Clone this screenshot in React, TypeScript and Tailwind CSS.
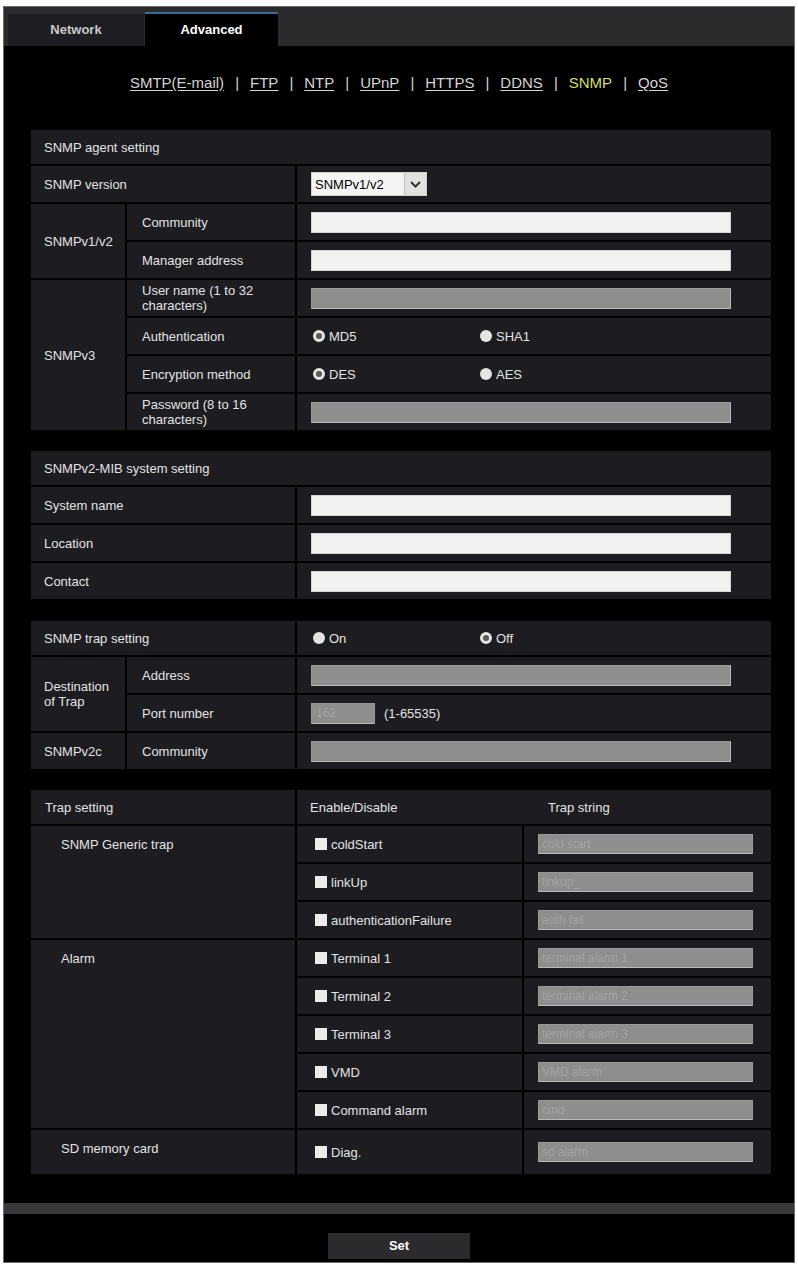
import React from "react";

const CELL = "bg-[#1d1d21] flex items-center text-[13px] leading-[15px] text-[#e2e2e2]";

const NAV = ["SMTP(E-mail)", "FTP", "NTP", "UPnP", "HTTPS", "DDNS", "SNMP", "QoS"];

const TRAPS = [
  { label: "coldStart", value: "cold start" },
  { label: "linkUp", value: "linkup_" },
  { label: "authenticationFailure", value: "auth fail" },
  { label: "Terminal 1", value: "terminal alarm 1" },
  { label: "Terminal 2", value: "terminal alarm 2" },
  { label: "Terminal 3", value: "terminal alarm 3" },
  { label: "VMD", value: "VMD alarm" },
  { label: "Command alarm", value: "cmd" },
];

function TextBox({ disabled, width = "w-[420px]" }: { disabled?: boolean; width?: string }) {
  return (
    <div
      className={`${width} h-[21px] border ${
        disabled
          ? "bg-[#8e8e8e] border-[#999] border-b-[#b8b8b8] border-r-[#b8b8b8]"
          : "bg-[#f1f1f1] border-[#d4d4d4]"
      }`}
    />
  );
}

function Radio({ checked, label }: { checked?: boolean; label: string }) {
  return (
    <div className="flex items-center gap-[4px] w-[167px]">
      {checked ? (
        <span className="w-[12px] h-[12px] rounded-full border-[3px] border-[#e4e4e4] bg-[#5a5a5a]" />
      ) : (
        <span className="w-[12px] h-[12px] rounded-full bg-[#e4e4e4]" />
      )}
      <span className="text-[13px]">{label}</span>
    </div>
  );
}

function Check({ label }: { label: string }) {
  return (
    <div className="flex items-center gap-[4px] pl-[18px]">
      <span className="w-[12px] h-[12px] bg-[#ececec]" />
      <span>{label}</span>
    </div>
  );
}

function TrapString({ value }: { value: string }) {
  return (
    <div className="w-[215px] h-[20px] ml-[14px] bg-[#8e8e8e] border border-[#999] border-b-[#b8b8b8] flex items-center px-[3px] text-[12px] text-[#a3a3a3]">
      {value}
    </div>
  );
}

export default function App() {
  return (
    <div
      className="bg-white pt-[6px] px-[3px] pb-[2px] w-[798px]"
      style={{ fontFamily: '"Liberation Sans", Arial, sans-serif' }}
    >
      <div className="border border-[#6b6b6b] bg-black">
        {/* tabs */}
        <div className="h-[39px] bg-[#2b2b2e] flex items-end pl-[4px]">
          <div className="w-[136px] h-[32px] bg-[#1e1e22] flex items-center justify-center text-[13px] font-bold text-[#c9c9c9]">
            Network
          </div>
          <div className="w-[133px] h-[34px] ml-[1px] bg-black border-t-2 border-[#3d6c99] flex items-center justify-center text-[13px] font-bold text-white">
            Advanced
          </div>
        </div>

        {/* sub navigation */}
        <div className="h-[84px] pt-[28px] flex justify-center text-[15px] leading-[18px] text-[#d4d4d4]">
          {NAV.map((n, i) => (
            <React.Fragment key={n}>
              {i > 0 && <span className="mx-[11px]">|</span>}
              <span className={n === "SNMP" ? "text-[#d6df5b]" : "underline underline-offset-2"}>{n}</span>
            </React.Fragment>
          ))}
        </div>

        <div className="ml-[27px] w-[740px]">
          {/* SNMP agent setting */}
          <div className="grid grid-cols-[94px_168px_474px] grid-rows-[34px_repeat(7,36px)] gap-[2px]">
            <div className={`${CELL} col-span-3 pl-[13px]`}>SNMP agent setting</div>
            <div className={`${CELL} col-span-2 pl-[13px]`}>SNMP version</div>
            <div className={`${CELL} pl-[14px]`}>
              <div className="w-[116px] h-[24px] bg-[#f4f4f4] border border-[#cfcfcf] flex items-center text-black text-[13px]">
                <span className="flex-1 pl-[3px]">SNMPv1/v2</span>
                <span className="w-[22px] h-full bg-[#e1e1e1] border-l border-[#bdbdbd] flex items-center justify-center">
                  <svg width="11" height="7" viewBox="0 0 11 7">
                    <path d="M1 1l4.5 4.5L10 1" fill="none" stroke="#333" strokeWidth="2" />
                  </svg>
                </span>
              </div>
            </div>

            <div className={`${CELL} row-span-2 pl-[13px]`}>SNMPv1/v2</div>
            <div className={`${CELL} pl-[15px]`}>Community</div>
            <div className={`${CELL} pl-[14px]`}>
              <TextBox />
            </div>
            <div className={`${CELL} pl-[15px]`}>Manager address</div>
            <div className={`${CELL} pl-[14px]`}>
              <TextBox />
            </div>

            <div className={`${CELL} row-span-4 pl-[13px]`}>SNMPv3</div>
            <div className={`${CELL} pl-[15px] pr-[8px]`}>User name (1 to 32 characters)</div>
            <div className={`${CELL} pl-[14px]`}>
              <TextBox disabled />
            </div>
            <div className={`${CELL} pl-[15px]`}>Authentication</div>
            <div className={`${CELL} pl-[16px]`}>
              <Radio checked label="MD5" />
              <Radio label="SHA1" />
            </div>
            <div className={`${CELL} pl-[15px]`}>Encryption method</div>
            <div className={`${CELL} pl-[16px]`}>
              <Radio checked label="DES" />
              <Radio label="AES" />
            </div>
            <div className={`${CELL} pl-[15px] pr-[8px]`}>Password (8 to 16 characters)</div>
            <div className={`${CELL} pl-[14px]`}>
              <TextBox disabled />
            </div>
          </div>

          {/* SNMPv2-MIB system setting */}
          <div className="mt-[21px] grid grid-cols-[264px_474px] grid-rows-[34px_repeat(3,36px)] gap-[2px]">
            <div className={`${CELL} col-span-2 pl-[13px]`}>SNMPv2-MIB system setting</div>
            {["System name", "Location", "Contact"].map((l) => (
              <React.Fragment key={l}>
                <div className={`${CELL} pl-[13px]`}>{l}</div>
                <div className={`${CELL} pl-[14px]`}>
                  <TextBox />
                </div>
              </React.Fragment>
            ))}
          </div>

          {/* SNMP trap setting */}
          <div className="mt-[22px] grid grid-cols-[94px_168px_474px] grid-rows-[34px_repeat(3,36px)] gap-[2px]">
            <div className={`${CELL} col-span-2 pl-[13px]`}>SNMP trap setting</div>
            <div className={`${CELL} pl-[16px]`}>
              <Radio label="On" />
              <Radio checked label="Off" />
            </div>
            <div className={`${CELL} row-span-2 pl-[13px] pr-[6px]`}>Destination of Trap</div>
            <div className={`${CELL} pl-[15px]`}>Address</div>
            <div className={`${CELL} pl-[14px]`}>
              <TextBox disabled />
            </div>
            <div className={`${CELL} pl-[15px]`}>Port number</div>
            <div className={`${CELL} pl-[14px]`}>
              <div className="w-[64px] h-[21px] bg-[#8e8e8e] border border-[#999] border-b-[#b8b8b8] flex items-center px-[4px] text-[12px] text-[#a3a3a3]">
                162
              </div>
              <span className="ml-[9px]">(1-65535)</span>
            </div>
            <div className={`${CELL} pl-[13px]`}>SNMPv2c</div>
            <div className={`${CELL} pl-[15px]`}>Community</div>
            <div className={`${CELL} pl-[14px]`}>
              <TextBox disabled />
            </div>
          </div>

          {/* Trap setting */}
          <div className="mt-[21px] grid grid-cols-[264px_225px_247px] grid-rows-[34px_repeat(8,36px)_44px] gap-[2px]">
            <div className={`${CELL} pl-[14px]`}>Trap setting</div>
            <div className={`${CELL} col-span-2 pl-[13px]`}>
              <span className="w-[238px]">Enable/Disable</span>
              <span>Trap string</span>
            </div>

            <div className={`${CELL} row-span-3 !items-start pt-[11px] pl-[30px]`}>SNMP Generic trap</div>
            {TRAPS.slice(0, 3).map((t) => (
              <React.Fragment key={t.label}>
                <div className={CELL}>
                  <Check label={t.label} />
                </div>
                <div className={CELL}>
                  <TrapString value={t.value} />
                </div>
              </React.Fragment>
            ))}

            <div className={`${CELL} row-span-5 !items-start pt-[11px] pl-[30px]`}>Alarm</div>
            {TRAPS.slice(3).map((t) => (
              <React.Fragment key={t.label}>
                <div className={CELL}>
                  <Check label={t.label} />
                </div>
                <div className={CELL}>
                  <TrapString value={t.value} />
                </div>
              </React.Fragment>
            ))}

            <div className={`${CELL} !items-start pt-[11px] pl-[30px]`}>SD memory card</div>
            <div className={CELL}>
              <Check label="Diag." />
            </div>
            <div className={CELL}>
              <TrapString value="sd alarm" />
            </div>
          </div>
        </div>

        <div className="h-[29px]" />
        <div className="h-[11px] bg-[#38383b]" />
        <div className="h-[48px] pt-[19px] flex justify-center">
          <div className="w-[142px] h-[26px] bg-[#2b2b2e] flex items-center justify-center text-[13px] font-bold text-white">
            Set
          </div>
        </div>
      </div>
    </div>
  );
}
